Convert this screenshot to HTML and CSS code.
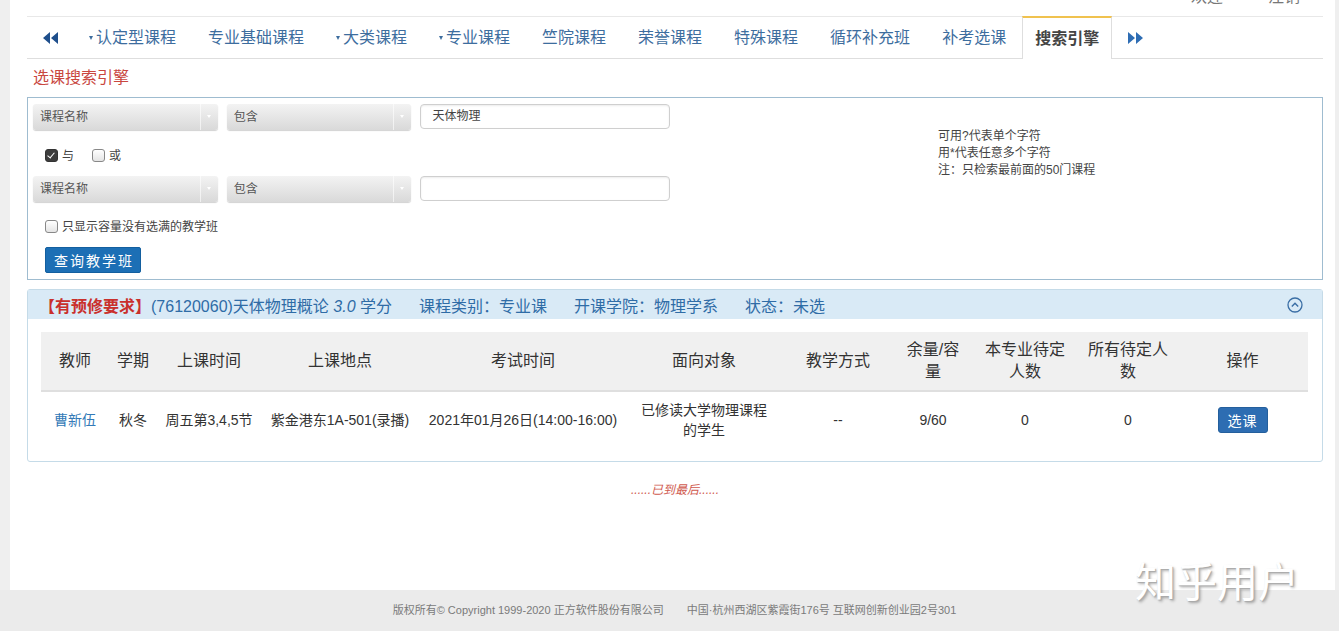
FILE: index.html
```html
<!DOCTYPE html>
<html lang="zh-CN">
<head>
  <meta charset="UTF-8" />
  <title>选课搜索引擎</title>
  <link rel="stylesheet" href="styles.css">
</head>
<body>

<div class="page">
  <div class="toplinks"><span>欢迎</span><span>注销</span></div>

  <ul class="tabs">
    <li class="tab-nav">
      <svg width="15" height="12" viewBox="0 0 15 12"><path d="M7 0 L0 6 L7 12 Z M15 0 L8 6 L15 12 Z" fill="#1f4f8c"/></svg>
    </li>
    <li><a><i class="caret"></i>认定型课程</a></li>
    <li><a>专业基础课程</a></li>
    <li><a><i class="caret"></i>大类课程</a></li>
    <li><a><i class="caret"></i>专业课程</a></li>
    <li><a>竺院课程</a></li>
    <li><a>荣誉课程</a></li>
    <li><a>特殊课程</a></li>
    <li><a>循环补充班</a></li>
    <li><a>补考选课</a></li>
    <li class="active"><a>搜索引擎</a></li>
    <li class="tab-nav">
      <svg width="15" height="12" viewBox="0 0 15 12"><path d="M0 0 L7 6 L0 12 Z M8 0 L15 6 L8 12 Z" fill="#2e6db4"/></svg>
    </li>
  </ul>

  <h3 class="title">选课搜索引擎</h3>

  <div class="search-box">
    <div class="search-form">
      <div class="cond-row">
        <div class="select"><span>课程名称</span><b></b></div>
        <div class="select"><span>包含</span><b></b></div>
        <div class="text-input">天体物理</div>
      </div>
      <div class="logic-row">
        <label><i class="cbox checked"></i>与</label>
        <label><i class="cbox"></i>或</label>
      </div>
      <div class="cond-row second">
        <div class="select"><span>课程名称</span><b></b></div>
        <div class="select"><span>包含</span><b></b></div>
        <div class="text-input"></div>
      </div>
      <div class="free-row">
        <label><i class="cbox"></i>只显示容量没有选满的教学班</label>
      </div>
      <button class="btn-query">查询教学班</button>
    </div>
    <div class="search-tips">
      <p>可用?代表单个字符</p>
      <p>用*代表任意多个字符</p>
      <p>注：只检索最前面的50门课程</p>
    </div>
  </div>

  <div class="course-panel">
    <div class="panel-head">
      <span class="pre">【有预修要求】</span><span class="name">(76120060)天体物理概论 <em>3.0</em> 学分</span>
      <span>课程类别：专业课</span>
      <span>开课学院：物理学系</span>
      <span>状态：未选</span>
      <svg class="fold" width="16" height="16" viewBox="0 0 16 16"><circle cx="8" cy="8" r="7" fill="none" stroke="#3a6ea5" stroke-width="1.3"/><path d="M4.8 9.6 L8 6.3 L11.2 9.6" fill="none" stroke="#3a6ea5" stroke-width="1.4"/></svg>
    </div>
    <div class="panel-body">
      <table class="class-table">
        <colgroup>
          <col style="width:68px"><col style="width:48px"><col style="width:104px"><col style="width:158px">
          <col style="width:208px"><col style="width:154px"><col style="width:114px"><col style="width:76px">
          <col style="width:108px"><col style="width:98px"><col style="width:131px">
        </colgroup>
        <thead>
          <tr>
            <th>教师</th><th>学期</th><th>上课时间</th><th>上课地点</th><th>考试时间</th>
            <th>面向对象</th><th>教学方式</th><th>余量/容<br>量</th><th>本专业待定<br>人数</th>
            <th>所有待定人<br>数</th><th>操作</th>
          </tr>
        </thead>
        <tbody>
          <tr>
            <td class="teacher">曹新伍</td>
            <td>秋冬</td>
            <td>周五第3,4,5节</td>
            <td>紫金港东1A-501(录播)</td>
            <td>2021年01月26日(14:00-16:00)</td>
            <td>已修读大学物理课程<br>的学生</td>
            <td>--</td>
            <td>9/60</td>
            <td>0</td>
            <td>0</td>
            <td><button class="btn-pick">选课</button></td>
          </tr>
        </tbody>
      </table>
    </div>
  </div>

  <div class="list-end">......已到最后......</div>
</div>

<div class="footer">
  <span>版权所有© Copyright 1999-2020 正方软件股份有限公司</span>
  <span>中国·杭州西湖区紫霞街176号 互联网创新创业园2号301</span>
</div>

<div class="watermark">知乎用户</div>

</body>
</html>
```

FILE: styles.css
```css
    body {
      margin: 0;
      background: #efefef;
      font-family: "Liberation Sans", "Noto Sans CJK SC", sans-serif;
      color: #333;
      overflow: hidden;
    }

    .page {
      width: 1325px;
      height: 590px;
      margin-left: 10px;
      padding: 0 12px 0 17px;
      box-sizing: border-box;
      background: #fff;
    }

    .toplinks {
      height: 16px;
      overflow: hidden;
      display: flex;
      justify-content: flex-end;
      gap: 45px;
      padding-right: 23px;
      font-size: 16px;
      line-height: 16px;
      color: #777;
    }

    .toplinks span {
      margin-top: -11px;
    }

    /* tab bar */
    .tabs {
      list-style: none;
      margin: 0;
      padding: 0;
      display: flex;
      height: 41px;
      border-top: 1px solid #e8e8e8;
      border-bottom: 1px solid #dedede;
    }

    .tabs li a {
      display: block;
      padding: 0 16px;
      line-height: 41px;
      font-size: 16px;
      color: #3d6d9e;
      cursor: pointer;
    }

    .tabs .caret {
      display: inline-block;
      width: 0;
      height: 0;
      border-top: 4px solid #3d6d9e;
      border-left: 2.5px solid transparent;
      border-right: 2.5px solid transparent;
      vertical-align: middle;
      margin: -2px 3px 0 0;
    }

    .tabs li.tab-nav {
      display: flex;
      align-items: center;
      padding: 0 15px 0 16px;
    }

    .tabs li.active {
      height: 41px;
      margin-top: -1px;
      border: 1px solid #dedede;
      border-top: 2px solid #f0c24f;
      border-bottom: none;
      background: #fff;
    }

    .tabs li.active a {
      padding: 0 12px;
      color: #444;
      font-weight: bold;
    }

    .title {
      margin: 9px 0 9px 6px;
      font-size: 16px;
      line-height: 20px;
      font-weight: normal;
      color: #c9473f;
    }

    /* search box */
    .search-box {
      display: flex;
      border: 1px solid #9fbcd0;
      padding: 6px 6px 6px 5px;
    }

    .search-form {
      width: 637px;
    }

    .cond-row {
      display: flex;
      gap: 9px;
      height: 26px;
    }

    .cond-row.second {
      margin-top: 10px;
    }

    .select {
      width: 185px;
      height: 26px;
      display: flex;
      border-radius: 3px;
      background: linear-gradient(#f3f3f3, #d9d9d9);
      box-shadow: 0 1px 1px rgba(0, 0, 0, 0.18);
      font-size: 12px;
      color: #555;
    }

    .select span {
      flex: 1;
      line-height: 26px;
      padding-left: 7px;
    }

    .select b {
      width: 17px;
      border-left: 1px solid rgba(255, 255, 255, 0.6);
      position: relative;
    }

    .select b::after {
      content: "";
      position: absolute;
      left: 6px;
      top: 11px;
      border-top: 3px solid #fff;
      border-left: 2.5px solid transparent;
      border-right: 2.5px solid transparent;
    }

    .text-input {
      width: 250px;
      height: 25px;
      box-sizing: border-box;
      border: 1px solid #cfcfcf;
      border-radius: 4px;
      box-shadow: inset 0 1px 2px rgba(0, 0, 0, 0.08);
      font-size: 12px;
      line-height: 23px;
      padding-left: 11px;
      color: #444;
    }

    .logic-row, .free-row {
      display: flex;
      align-items: center;
      gap: 18px;
      padding-left: 12px;
      font-size: 12px;
      color: #444;
    }

    .logic-row {
      height: 24px;
      margin-top: 12px;
    }

    .free-row {
      height: 22px;
      margin-top: 12px;
    }

    .cbox {
      display: inline-block;
      width: 11px;
      height: 11px;
      border: 1px solid #888;
      border-radius: 3px;
      background: linear-gradient(#fff, #e4e4e4);
      vertical-align: middle;
      margin: -2px 4px 0 0;
      position: relative;
    }

    .cbox.checked {
      background: #3d3d3d;
      border-color: #333;
    }

    .cbox.checked::after {
      content: "";
      position: absolute;
      left: 3px;
      top: 1px;
      width: 3px;
      height: 6px;
      border: solid #fff;
      border-width: 0 1.5px 1.5px 0;
      transform: rotate(40deg);
    }

    .btn-query {
      display: block;
      margin: 11px 0 0 12px;
      width: 96px;
      height: 26px;
      padding: 0;
      border: 1px solid #135f9f;
      border-radius: 2px;
      background: #1c6fb5;
      color: #fff;
      font-family: inherit;
      font-size: 14px;
      letter-spacing: 2px;
      text-indent: 2px;
    }

    .search-tips {
      margin-left: 268px;
      padding-top: 24px;
      font-size: 12px;
      line-height: 17px;
      color: #444;
    }

    .search-tips p {
      margin: 0;
    }

    /* course panel */
    .course-panel {
      margin-top: 9px;
      border: 1px solid #c5dbe8;
      border-radius: 3px;
    }

    .panel-head {
      height: 29px;
      display: flex;
      align-items: center;
      padding: 0 19px 0 11px;
      background: #d9eaf6;
      font-size: 16px;
      color: #2f6ca6;
    }

    .panel-head span {
      margin-right: 27px;
    }

    .panel-head .pre {
      margin-right: 0;
      color: #c9302c;
      font-weight: bold;
    }

    .panel-head .fold {
      margin-left: auto;
    }

    .panel-body {
      padding: 13px 13px 13px 13px;
    }

    .class-table {
      width: 1267px;
      border-collapse: collapse;
      table-layout: fixed;
      text-align: center;
    }

    .class-table th {
      height: 58px;
      padding: 0 4px;
      background: #f0f0f0;
      border-bottom: 2px solid #dfdfdf;
      font-size: 16px;
      line-height: 22px;
      font-weight: normal;
      color: #333;
    }

    .class-table td {
      height: 56px;
      padding: 0 3px;
      font-size: 14px;
      line-height: 20px;
      color: #333;
    }

    .class-table td.teacher {
      color: #337ab7;
    }

    .btn-pick {
      width: 50px;
      height: 26px;
      padding: 0;
      border: 1px solid #245f9c;
      border-radius: 3px;
      background: #2d6db2;
      color: #fff;
      font-family: inherit;
      font-size: 14px;
      letter-spacing: 1px;
    }

    .list-end {
      margin-top: 20px;
      text-align: center;
      font-size: 12px;
      line-height: 16px;
      font-style: italic;
      color: #d0594e;
    }

    .footer {
      height: 41px;
      line-height: 41px;
      padding-left: 10px;
      background: #ebebeb;
      text-align: center;
      font-size: 11px;
      color: #7a7a7a;
    }

    .footer span + span {
      margin-left: 20px;
    }

    .watermark {
      position: absolute;
      left: 1135px;
      top: 559px;
      font-size: 41px;
      line-height: 48px;
      color: #fff;
      text-shadow: 1px 1px 1px #aaa, 2px 2px 3px rgba(0, 0, 0, 0.3);
    }
```
